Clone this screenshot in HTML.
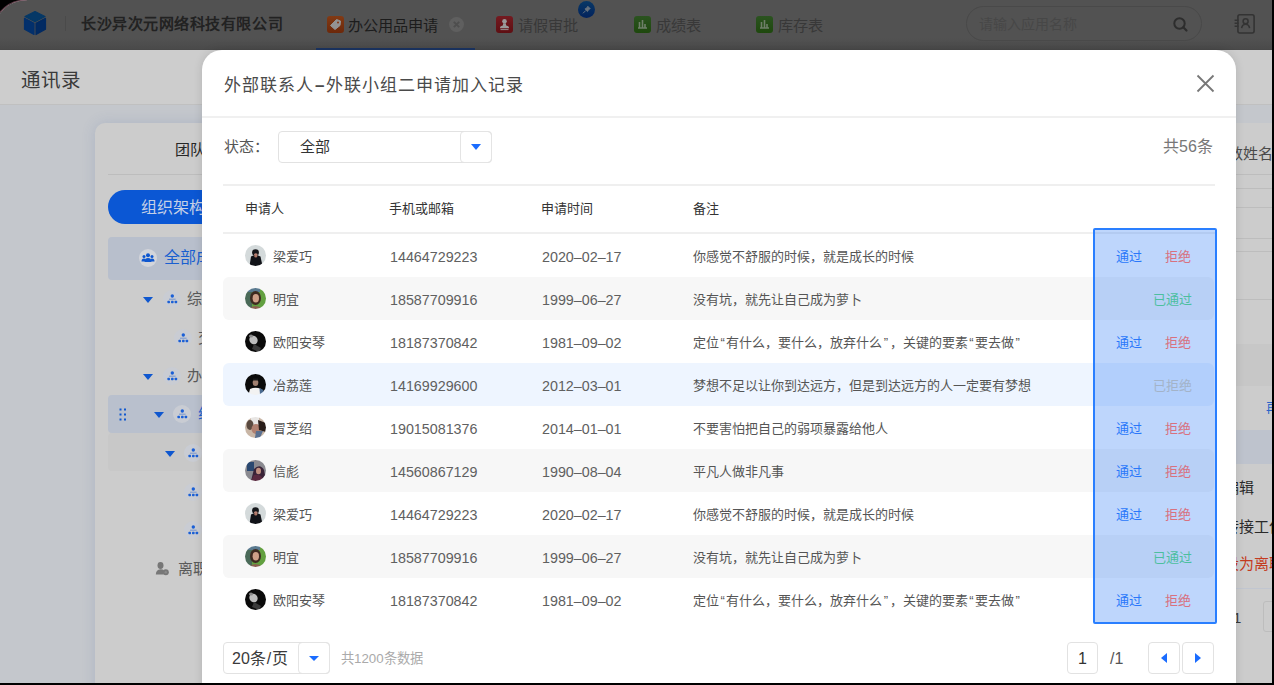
<!DOCTYPE html>
<html lang="zh-CN"><head><meta charset="utf-8">
<style>
*{box-sizing:border-box;margin:0;padding:0}
html,body{width:1274px;height:685px;overflow:hidden;background:#000}
body{position:relative;font-family:"Liberation Sans",sans-serif}
.a{position:absolute;white-space:nowrap}
#app{position:absolute;left:-7px;top:0;width:1279px;height:683px;background:#c4c7cc;border-top-left-radius:34px;overflow:hidden}
#hdr{position:absolute;left:0;top:0;width:1279px;height:50px;background:linear-gradient(#525252 0,#525252 38px,#4a4a4a 49px,#464646 50px)}
.tab{font-size:15.2px;line-height:16px;color:#383838}
.ico{position:absolute;width:17px;height:17px;border-radius:3px}
#bgtitle{left:0;top:50px;width:1274px;height:55px;background:#cdcdcd;border-bottom:1px solid #c0c0c0}
#card{left:95px;top:123px;width:1300px;height:600px;background:#cccccc;border-radius:10px;box-shadow:0 0 14px rgba(70,100,160,0.18)}
.tree{font-size:15px;line-height:18px;color:#5a5a5a}
.tc{position:absolute;width:18px;height:18px;border-radius:50%;background:#c9ccd3}
.tri{position:absolute;width:0;height:0;border-left:5px solid transparent;border-right:5px solid transparent;border-top:6px solid #0f57cf;margin-left:1px;margin-top:1px}
#modal{left:202px;top:50px;width:1034px;height:660px;background:#fff;border-radius:20px;box-shadow:0 0 10px rgba(0,0,0,0.12)}
.th{font-size:13px;line-height:16px;color:#333;font-weight:500}
.row{position:absolute;left:21px;width:991px;height:43px;border-radius:6px}
.td{position:absolute;font-size:13px;line-height:16px;color:#555;top:15px}
.num{font-size:14.3px;color:#606060}
.av{position:absolute;left:22px;top:11px;width:21px;height:21px;clip-path:circle(50%);filter:blur(0.4px)}
.act{font-size:13px;line-height:16px}
.ok{color:#2a78fa}
.q{margin:0 1.5px}
.no{color:#d8717f}
</style></head>
<body>
<div id="app">
  <div id="hdr"></div>
</div>
<!-- header content (absolute to body) -->
<svg class="a" style="left:0;top:0" width="40" height="20" viewBox="0 0 40 20"><path d="M0 12.3 A34 34 0 0 1 27 0" fill="none" stroke="rgba(170,110,130,0.55)" stroke-width="1.2"/></svg>
<svg class="a" style="left:23px;top:10px" width="24" height="26" viewBox="0 0 24 26">
  <g stroke-linejoin="round" stroke-width="1.2"><path d="M12 1.5 L22 6.5 L12 11.8 L2 6.5 Z" fill="#053866" stroke="#053866"/>
  <path d="M1.5 8.3 L11 13.3 L11 24.5 L1.5 19.3 Z" fill="#03306c" stroke="#03306c"/>
  <path d="M13 13.3 L22.5 8.3 L22.5 19.3 L13 24.5 Z" fill="#022a62" stroke="#022a62"/></g>
</svg>
<div class="a" style="left:65px;top:16px;width:1px;height:15px;background:#4a4a4a"></div>
<div class="a" style="left:81px;top:15px;font-size:15px;line-height:18px;font-weight:bold;color:#222;letter-spacing:0.55px">长沙异次元网络科技有限公司</div>

<div class="ico a" style="left:327px;top:16px;background:linear-gradient(#823a14,#6c280a)"></div>
<svg class="a" style="left:327px;top:16px" width="17" height="17" viewBox="0 0 17 17"><path d="M9.5 3.5 L13.5 5 L13 9.5 L8 13.5 L3.5 9.5 Z" fill="#939393" stroke="#939393" stroke-width="1" stroke-linejoin="round"/><circle cx="11" cy="6.5" r="1" fill="#84340f"/></svg>
<div class="a tab" style="left:348px;top:17.5px;color:#1c1c1c;font-weight:500">办公用品申请</div>
<div class="a" style="left:449px;top:17px;width:15px;height:15px;border-radius:50%;background:#5f5f5f"></div>
<svg class="a" style="left:449px;top:17px" width="15" height="15" viewBox="0 0 15 15"><path d="M4.8 4.8 L10.2 10.2 M10.2 4.8 L4.8 10.2" stroke="#4e4e4e" stroke-width="1.9"/></svg>
<div class="a" style="left:316px;top:48px;width:159px;height:2px;background:#1b3462"></div>

<div class="ico a" style="left:496px;top:16px;background:linear-gradient(#741a20,#5e0f13)"></div>
<svg class="a" style="left:496px;top:16px" width="17" height="17" viewBox="0 0 17 17"><circle cx="8.5" cy="5.3" r="2.3" fill="#9a9a9a"/><path d="M7.2 7.2 L9.8 7.2 L10.2 9.6 Q13 10 13 11.6 L13 12.3 L4 12.3 L4 11.6 Q4 10 6.8 9.6 Z" fill="#9a9a9a"/><path d="M4.5 13.6 H12.5" stroke="#9a9a9a" stroke-width="0.9"/></svg>
<div class="a tab" style="left:518px;top:17.5px">请假审批</div>
<div class="a" style="left:577.5px;top:1.2px;width:17px;height:17px;border-radius:50%;background:linear-gradient(#083866,#02225c)"></div>
<svg class="a" style="left:578px;top:1px" width="17" height="17" viewBox="0 0 17 17"><path d="M9.8 5.2 L12.3 7.7 L10.8 8.4 L9.5 10.6 L6.9 8 L9 6.7 Z" fill="#67727e" stroke="#67727e" stroke-width="0.8" stroke-linejoin="round"/><path d="M7.8 9.5 L5 12.3" stroke="#67727e" stroke-width="1"/></svg>

<div class="ico a" style="left:634px;top:16px;background:linear-gradient(#2b5320,#1e480d)"></div>
<svg class="a" style="left:634px;top:16px" width="17" height="17" viewBox="0 0 17 17"><path d="M4 12 L13 12 M5.5 12 L5.5 6 M8.5 12 L8.5 4 M11 12 L11 8" stroke="#6f7f69" stroke-width="1.6"/></svg>
<div class="a tab" style="left:656px;top:17.5px">成绩表</div>
<div class="ico a" style="left:756px;top:16px;background:linear-gradient(#2b5320,#1e480d)"></div>
<svg class="a" style="left:756px;top:16px" width="17" height="17" viewBox="0 0 17 17"><path d="M4 12 L13 12 M5.5 12 L5.5 6 M8.5 12 L8.5 4 M11 12 L11 8" stroke="#6f7f69" stroke-width="1.6"/></svg>
<div class="a tab" style="left:778px;top:17.5px">库存表</div>

<div class="a" style="left:966px;top:6px;width:236px;height:35px;border-radius:18px;border:1px solid #494949;background:#525252"></div>
<div class="a" style="left:979px;top:16px;font-size:14px;line-height:16px;color:#474747">请输入应用名称</div>
<svg class="a" style="left:1172px;top:16px" width="17" height="17" viewBox="0 0 17 17"><circle cx="7.5" cy="7.5" r="5.2" fill="none" stroke="#2d2d2d" stroke-width="2"/><path d="M11.3 11.3 L14.5 14.5" stroke="#2d2d2d" stroke-width="2.2" stroke-linecap="round"/></svg>
<svg class="a" style="left:1234px;top:13px" width="22" height="22" viewBox="0 0 22 22"><rect x="3.9" y="1.8" width="16.2" height="18.2" rx="2" fill="none" stroke="#333" stroke-width="1.6"/><circle cx="11.6" cy="8.2" r="2.5" fill="none" stroke="#333" stroke-width="1.5"/><path d="M7.6 15.2 Q8.2 11.2 11.6 11.2 Q15 11.2 15.6 15.2" fill="none" stroke="#333" stroke-width="1.5"/><path d="M0.6 7.2 H4.5 M0.6 10.2 H4.5 M0.6 13.2 H4.5" stroke="#333" stroke-width="1.4"/></svg>

<!-- background page -->
<div class="a" id="bgtitle"></div>
<div class="a" style="left:21px;top:70px;font-size:19.5px;line-height:20px;color:#3a3a3a">通讯录</div>
<div class="a" id="card"></div>
<div class="a" style="left:175px;top:141px;font-size:15px;line-height:17px;color:#262626">团队</div>
<div class="a" style="left:108px;top:174px;width:1200px;height:1px;background:#bdbdbd"></div>
<div class="a" style="left:108px;top:190px;width:200px;height:34px;border-radius:17px;background:#0b57d4"></div>
<div class="a" style="left:141px;top:199px;font-size:16px;line-height:18px;color:#c5d0e6">组织架构</div>
<div class="a" style="left:108px;top:237px;width:200px;height:43px;background:#b8bfcc;border-radius:4px"></div>
<div class="tc" style="left:139px;top:249px;background:#d3d5da"></div>
<svg class="a" style="left:141px;top:252px" width="14" height="12" viewBox="0 0 14 12"><g fill="#0f57cf"><circle cx="7" cy="3.2" r="2"/><circle cx="3" cy="4.6" r="1.5"/><circle cx="11" cy="4.6" r="1.5"/><path d="M3.5 10 Q3.5 6 7 6 Q10.5 6 10.5 10 Z"/><path d="M0.5 9.5 Q0.5 6.5 3 6.5 Q4.2 6.5 4.6 7 L3.8 9.5 Z"/><path d="M13.5 9.5 Q13.5 6.5 11 6.5 Q9.8 6.5 9.4 7 L10.2 9.5 Z"/></g></svg>
<div class="a tree" style="left:164px;top:249px;color:#1a5fd0;font-size:16px">全部成员</div>

<div class="tri a" style="left:142px;top:296px"></div>
<div class="tc" style="left:163px;top:290px"></div>
<svg class="a tico" style="left:165px;top:292px" width="14" height="14" viewBox="0 0 14 14"><circle cx="7.3" cy="4" r="1.7" fill="#1a5fd6"/><path d="M4 7.2 H10.6" stroke="#6d8fd0" stroke-width="0.9"/><g fill="#1a5fd6"><rect x="2.4" y="8.7" width="2.6" height="2.6" rx="0.7"/><rect x="6" y="8.7" width="2.6" height="2.6" rx="0.7"/><rect x="9.6" y="8.7" width="2.6" height="2.6" rx="0.7"/></g></svg>
<div class="a tree" style="left:187px;top:290px">综合部</div>

<div class="tc" style="left:174px;top:329px"></div>
<svg class="a" style="left:176px;top:331px" width="14" height="14" viewBox="0 0 14 14"><circle cx="7.3" cy="4" r="1.7" fill="#1a5fd6"/><path d="M4 7.2 H10.6" stroke="#6d8fd0" stroke-width="0.9"/><g fill="#1a5fd6"><rect x="2.4" y="8.7" width="2.6" height="2.6" rx="0.7"/><rect x="6" y="8.7" width="2.6" height="2.6" rx="0.7"/><rect x="9.6" y="8.7" width="2.6" height="2.6" rx="0.7"/></g></svg>
<div class="a tree" style="left:198px;top:329px">交付</div>

<div class="tri a" style="left:142px;top:373px"></div>
<div class="tc" style="left:163px;top:367px"></div>
<svg class="a" style="left:165px;top:369px" width="14" height="14" viewBox="0 0 14 14"><circle cx="7.3" cy="4" r="1.7" fill="#1a5fd6"/><path d="M4 7.2 H10.6" stroke="#6d8fd0" stroke-width="0.9"/><g fill="#1a5fd6"><rect x="2.4" y="8.7" width="2.6" height="2.6" rx="0.7"/><rect x="6" y="8.7" width="2.6" height="2.6" rx="0.7"/><rect x="9.6" y="8.7" width="2.6" height="2.6" rx="0.7"/></g></svg>
<div class="a tree" style="left:187px;top:367px">办公室</div>

<div class="a" style="left:108px;top:395px;width:200px;height:38px;background:#b9c0cd;border-radius:4px"></div>
<svg class="a" style="left:119px;top:408px" width="8" height="13" viewBox="0 0 8 13"><g fill="#0f57cf"><rect x="0.5" y="0.5" width="2" height="2"/><rect x="5" y="0.5" width="2" height="2"/><rect x="0.5" y="5.5" width="2" height="2"/><rect x="5" y="5.5" width="2" height="2"/><rect x="0.5" y="10.5" width="2" height="2"/><rect x="5" y="10.5" width="2" height="2"/></g></svg>
<div class="tri a" style="left:153px;top:411px"></div>
<div class="tc" style="left:173px;top:405px"></div>
<svg class="a" style="left:175px;top:407px" width="14" height="14" viewBox="0 0 14 14"><circle cx="7.3" cy="4" r="1.7" fill="#1a5fd6"/><path d="M4 7.2 H10.6" stroke="#6d8fd0" stroke-width="0.9"/><g fill="#1a5fd6"><rect x="2.4" y="8.7" width="2.6" height="2.6" rx="0.7"/><rect x="6" y="8.7" width="2.6" height="2.6" rx="0.7"/><rect x="9.6" y="8.7" width="2.6" height="2.6" rx="0.7"/></g></svg>
<div class="a tree" style="left:198px;top:405px;color:#1a5fd0">组织部</div>

<div class="a" style="left:108px;top:433px;width:200px;height:38px;background:#c8c8c8;border-radius:4px"></div>
<div class="tri a" style="left:164px;top:450px"></div>
<div class="tc" style="left:184px;top:444px"></div>
<svg class="a" style="left:186px;top:446px" width="14" height="14" viewBox="0 0 14 14"><circle cx="7.3" cy="4" r="1.7" fill="#1a5fd6"/><path d="M4 7.2 H10.6" stroke="#6d8fd0" stroke-width="0.9"/><g fill="#1a5fd6"><rect x="2.4" y="8.7" width="2.6" height="2.6" rx="0.7"/><rect x="6" y="8.7" width="2.6" height="2.6" rx="0.7"/><rect x="9.6" y="8.7" width="2.6" height="2.6" rx="0.7"/></g></svg>
<div class="tc" style="left:184px;top:483px"></div>
<svg class="a" style="left:186px;top:485px" width="14" height="14" viewBox="0 0 14 14"><circle cx="7.3" cy="4" r="1.7" fill="#1a5fd6"/><path d="M4 7.2 H10.6" stroke="#6d8fd0" stroke-width="0.9"/><g fill="#1a5fd6"><rect x="2.4" y="8.7" width="2.6" height="2.6" rx="0.7"/><rect x="6" y="8.7" width="2.6" height="2.6" rx="0.7"/><rect x="9.6" y="8.7" width="2.6" height="2.6" rx="0.7"/></g></svg>
<div class="tc" style="left:184px;top:521px"></div>
<svg class="a" style="left:186px;top:523px" width="14" height="14" viewBox="0 0 14 14"><circle cx="7.3" cy="4" r="1.7" fill="#1a5fd6"/><path d="M4 7.2 H10.6" stroke="#6d8fd0" stroke-width="0.9"/><g fill="#1a5fd6"><rect x="2.4" y="8.7" width="2.6" height="2.6" rx="0.7"/><rect x="6" y="8.7" width="2.6" height="2.6" rx="0.7"/><rect x="9.6" y="8.7" width="2.6" height="2.6" rx="0.7"/></g></svg>
<svg class="a" style="left:155px;top:561px" width="15" height="15" viewBox="0 0 15 15"><g fill="#777"><ellipse cx="5.5" cy="4.5" rx="3" ry="3.4"/><path d="M0.8 13.5 Q1 8.5 5.5 8.2 Q8 8.2 9 9.5 L8.5 13.5 Z"/><circle cx="10.8" cy="11.2" r="3"/></g><circle cx="10.8" cy="11.2" r="1.2" fill="#8a8a8a"/></svg>
<div class="a tree" style="left:178px;top:560px">离职人员</div>

<!-- right side background -->
<div class="a" style="left:1236px;top:105px;width:40px;height:18px;background:#c4c7cc"></div>
<div class="a" style="left:1228px;top:145px;font-size:15px;line-height:18px;color:#4a4a4a">数姓名</div>
<div class="a" style="left:1236px;top:188px;width:40px;height:1px;background:#bdbdbd"></div>
<div class="a" style="left:1236px;top:207px;width:40px;height:1px;background:#bdbdbd"></div>
<div class="a" style="left:1236px;top:238px;width:40px;height:1px;background:#bdbdbd"></div>
<div class="a" style="left:1236px;top:251px;width:40px;height:1px;background:#bdbdbd"></div>
<div class="a" style="left:1236px;top:299px;width:40px;height:1px;background:#bdbdbd"></div>
<div class="a" style="left:1236px;top:344px;width:40px;height:42px;background:#c7c7c7"></div>
<div class="a" style="left:1266px;top:400px;font-size:13px;line-height:16px;color:#2a64c8">再</div>
<div class="a" style="left:1236px;top:430px;width:40px;height:34px;background:#bec3cd"></div>
<div class="a" style="left:1224px;top:479px;font-size:15px;line-height:17px;color:#2a2a2a">编辑</div>
<div class="a" style="left:1224px;top:518px;font-size:15px;line-height:17px;color:#2a2a2a">转接工作</div>
<div class="a" style="left:1224px;top:555px;font-size:15px;line-height:17px;color:#c43a20">设为离职</div>
<div class="a" style="left:1236px;top:588px;width:40px;height:1px;background:#c1c6d0"></div>
<div class="a" style="left:1233px;top:609px;font-size:15px;line-height:17px;color:#3a3a3a">1</div>
<div class="a" style="left:1263px;top:601px;width:30px;height:31px;border:1px solid #bdbdbd;border-radius:3px"></div>

<!-- modal -->
<div class="a" id="modal"></div>
<div class="a" style="left:224px;top:77px;font-size:17px;line-height:18px;color:#4a4a4a;letter-spacing:1px">外部联系人<span style="font-family:'Liberation Sans';font-weight:bold;margin:0 1px">–</span>外联小组二申请加入记录</div>
<svg class="a" style="left:1196px;top:74px" width="19" height="19" viewBox="0 0 19 19"><path d="M1.5 1.5 L17.5 17.5 M17.5 1.5 L1.5 17.5" stroke="#777" stroke-width="1.8"/></svg>
<div class="a" style="left:202px;top:116px;width:1034px;height:2px;background:#f0f0f0"></div>

<div class="a" style="left:224px;top:139px;font-size:15px;line-height:16px;color:#555">状态：</div>
<div class="a" style="left:278px;top:131px;width:214px;height:32px;border:1px solid #e2e2e2;border-radius:4px"></div>
<div class="a" style="left:460px;top:131px;width:32px;height:32px;border:1px solid #e4e4e4;border-radius:4px"></div>
<div class="a" style="left:300px;top:139px;font-size:15px;line-height:16px;color:#333">全部</div>
<div class="a" style="left:471px;top:144px;width:0;height:0;border-left:5px solid transparent;border-right:5px solid transparent;border-top:6px solid #1a6cff"></div>
<div class="a" style="left:1163px;top:139px;font-size:16px;line-height:16px;color:#777">共56条</div>

<div class="a" style="left:223px;top:184px;width:992px;height:2px;background:#efefef"></div>
<div class="a th" style="left:245px;top:201px">申请人</div>
<div class="a th" style="left:389px;top:201px">手机或邮箱</div>
<div class="a th" style="left:541px;top:201px">申请时间</div>
<div class="a th" style="left:693px;top:201px">备注</div>
<div class="a" style="left:223px;top:232px;width:992px;height:2px;background:#efefef"></div>

<!--ROWS-->
<div id="rows" class="a" style="left:202px;top:234px;width:1034px;height:390px">
<div class="row" style="top:0px;"><svg class="av" viewBox="0 0 21 21"><rect width="21" height="21" fill="#d4dadb"/><ellipse cx="10.5" cy="7.5" rx="3.4" ry="3.3" fill="#15161a"/><ellipse cx="10.8" cy="10.5" rx="2" ry="2.2" fill="#c08a7c"/><path d="M4.5 21 L6 11.5 Q10.5 8.5 15.5 11.5 L17.5 21 Z" fill="#111318"/><ellipse cx="10.8" cy="11" rx="1.6" ry="1.6" fill="#b07868"/></svg><div class="td" style="left:50px">梁爱巧</div><div class="td num" style="left:167px">14464729223</div><div class="td num" style="left:319px">2020–02–17</div><div class="td" style="left:470px">你感觉不舒服的时候，就是成长的时候</div></div>
<div class="row" style="top:43px;background:#f7f7f7;"><svg class="av" viewBox="0 0 21 21"><rect width="21" height="21" fill="#62a040"/><rect x="0" y="0" width="7" height="21" fill="#4a6a58"/><rect x="3" y="0" width="12" height="4" fill="#5a7a90"/><ellipse cx="10.5" cy="10" rx="5.5" ry="7" fill="#3e2a20"/><ellipse cx="10.8" cy="10.2" rx="3.2" ry="4.2" fill="#cfa088"/><path d="M4 21 Q10.5 15 17 21 Z" fill="#8a6050"/></svg><div class="td" style="left:50px">明宜</div><div class="td num" style="left:167px">18587709916</div><div class="td num" style="left:319px">1999–06–27</div><div class="td" style="left:470px">没有坑，就先让自己成为萝卜</div></div>
<div class="row" style="top:86px;"><svg class="av" viewBox="0 0 21 21"><rect width="21" height="21" fill="#0a0a0a"/><ellipse cx="8.5" cy="9" rx="4" ry="4.5" fill="#bdbdbd" transform="rotate(-35 8.5 9)"/><ellipse cx="6" cy="5" rx="2" ry="1.5" fill="#888"/><path d="M9 13 L16 17 L14 21 L7 18 Z" fill="#3a3a3a"/></svg><div class="td" style="left:50px">欧阳安琴</div><div class="td num" style="left:167px">18187370842</div><div class="td num" style="left:319px">1981–09–02</div><div class="td" style="left:470px">定位<span class=q>“</span>有什么，要什么，放弃什么<span class=q>”</span>，关键的要素<span class=q>“</span>要去做<span class=q>”</span></div></div>
<div class="row" style="top:129px;background:#eef5ff;"><svg class="av" viewBox="0 0 21 21"><rect width="21" height="21" fill="#0b0b0b"/><ellipse cx="10.5" cy="8.5" rx="2.8" ry="3.6" fill="#a08070"/><rect x="8" y="4.5" width="5" height="2" fill="#1a1a1a"/><path d="M3.5 21 L5 15 Q10.5 12.5 16 15 L17 21 Z" fill="#f2f2f2"/><path d="M14.5 14 L18.5 16 L18 21 L15 21 Z" fill="#4a6a90"/></svg><div class="td" style="left:50px">冶荔莲</div><div class="td num" style="left:167px">14169929600</div><div class="td num" style="left:319px">2012–03–01</div><div class="td" style="left:470px">梦想不足以让你到达远方，但是到达远方的人一定要有梦想</div></div>
<div class="row" style="top:172px;"><svg class="av" viewBox="0 0 21 21"><rect width="21" height="21" fill="#c9b6a6"/><rect x="6" y="0" width="8" height="8" fill="#e8e6e4"/><ellipse cx="5" cy="8" rx="3.5" ry="5" fill="#5a4a40"/><ellipse cx="11" cy="12" rx="4.5" ry="5" fill="#b08070"/><path d="M13 3 L21 6 L21 15 L14 13 Z" fill="#2a1e1a"/><path d="M11 14 L18 14 L15 21 L10 21 Z" fill="#5a7090"/></svg><div class="td" style="left:50px">冒芝绍</div><div class="td num" style="left:167px">19015081376</div><div class="td num" style="left:319px">2014–01–01</div><div class="td" style="left:470px">不要害怕把自己的弱项暴露给他人</div></div>
<div class="row" style="top:215px;background:#f7f7f7;"><svg class="av" viewBox="0 0 21 21"><rect width="21" height="21" fill="#8a8a90"/><rect x="2" y="2" width="7" height="9" fill="#2a4870"/><path d="M9 9 Q15 3 19 10 L21 21 L6 21 Z" fill="#3a2438"/><ellipse cx="13.5" cy="11" rx="2.5" ry="3.2" fill="#c09080"/><path d="M6 21 L9 15 Q13 14 16 16 L19 21 Z" fill="#5a2a40"/></svg><div class="td" style="left:50px">信彪</div><div class="td num" style="left:167px">14560867129</div><div class="td num" style="left:319px">1990–08–04</div><div class="td" style="left:470px">平凡人做非凡事</div></div>
<div class="row" style="top:258px;"><svg class="av" viewBox="0 0 21 21"><rect width="21" height="21" fill="#d4dadb"/><ellipse cx="10.5" cy="7.5" rx="3.4" ry="3.3" fill="#15161a"/><ellipse cx="10.8" cy="10.5" rx="2" ry="2.2" fill="#c08a7c"/><path d="M4.5 21 L6 11.5 Q10.5 8.5 15.5 11.5 L17.5 21 Z" fill="#111318"/><ellipse cx="10.8" cy="11" rx="1.6" ry="1.6" fill="#b07868"/></svg><div class="td" style="left:50px">梁爱巧</div><div class="td num" style="left:167px">14464729223</div><div class="td num" style="left:319px">2020–02–17</div><div class="td" style="left:470px">你感觉不舒服的时候，就是成长的时候</div></div>
<div class="row" style="top:301px;background:#f7f7f7;"><svg class="av" viewBox="0 0 21 21"><rect width="21" height="21" fill="#62a040"/><rect x="0" y="0" width="7" height="21" fill="#4a6a58"/><rect x="3" y="0" width="12" height="4" fill="#5a7a90"/><ellipse cx="10.5" cy="10" rx="5.5" ry="7" fill="#3e2a20"/><ellipse cx="10.8" cy="10.2" rx="3.2" ry="4.2" fill="#cfa088"/><path d="M4 21 Q10.5 15 17 21 Z" fill="#8a6050"/></svg><div class="td" style="left:50px">明宜</div><div class="td num" style="left:167px">18587709916</div><div class="td num" style="left:319px">1999–06–27</div><div class="td" style="left:470px">没有坑，就先让自己成为萝卜</div></div>
<div class="row" style="top:344px;"><svg class="av" viewBox="0 0 21 21"><rect width="21" height="21" fill="#0a0a0a"/><ellipse cx="8.5" cy="9" rx="4" ry="4.5" fill="#bdbdbd" transform="rotate(-35 8.5 9)"/><ellipse cx="6" cy="5" rx="2" ry="1.5" fill="#888"/><path d="M9 13 L16 17 L14 21 L7 18 Z" fill="#3a3a3a"/></svg><div class="td" style="left:50px">欧阳安琴</div><div class="td num" style="left:167px">18187370842</div><div class="td num" style="left:319px">1981–09–02</div><div class="td" style="left:470px">定位<span class=q>“</span>有什么，要什么，放弃什么<span class=q>”</span>，关键的要素<span class=q>“</span>要去做<span class=q>”</span></div></div>
</div>
<div class="a" style="left:1093px;top:228px;width:124px;height:396px;border:2px solid #2a7fff;border-radius:2px;background:rgba(40,120,245,0.3)"></div>
<div class="a act ok" style="left:1116px;top:248.5px">通过</div><div class="a act no" style="left:1165px;top:248.5px">拒绝</div>
<div class="a act" style="left:1153px;top:291.5px;color:#4cbf9f">已通过</div>
<div class="a act ok" style="left:1116px;top:334.5px">通过</div><div class="a act no" style="left:1165px;top:334.5px">拒绝</div>
<div class="a act" style="left:1153px;top:377.5px;color:#a3b3c8">已拒绝</div>
<div class="a act ok" style="left:1116px;top:420.5px">通过</div><div class="a act no" style="left:1165px;top:420.5px">拒绝</div>
<div class="a act ok" style="left:1116px;top:463.5px">通过</div><div class="a act no" style="left:1165px;top:463.5px">拒绝</div>
<div class="a act ok" style="left:1116px;top:506.5px">通过</div><div class="a act no" style="left:1165px;top:506.5px">拒绝</div>
<div class="a act" style="left:1153px;top:549.5px;color:#4cbf9f">已通过</div>
<div class="a act ok" style="left:1116px;top:592.5px">通过</div><div class="a act no" style="left:1165px;top:592.5px">拒绝</div>
<!--/ROWS-->


<!-- footer -->
<div class="a" style="left:223px;top:642px;width:107px;height:32px;border:1px solid #e2e2e2;border-radius:4px"></div>
<div class="a" style="left:298px;top:642px;width:32px;height:32px;border:1px solid #e4e4e4;border-radius:4px"></div>
<div class="a" style="left:232px;top:650px;font-size:16px;line-height:17px;color:#3a3a3a">20条<span style="margin:0 1px">/</span>页</div>
<div class="a" style="left:309px;top:656px;width:0;height:0;border-left:5px solid transparent;border-right:5px solid transparent;border-top:5px solid #1a6cff"></div>
<div class="a" style="left:341px;top:651px;font-size:13.3px;line-height:15px;color:#aaa">共1200条数据</div>

<div class="a" style="left:1067px;top:642px;width:31px;height:32px;border:1px solid #e2e2e2;border-radius:4px"></div>
<div class="a" style="left:1078px;top:650px;font-size:16px;line-height:17px;color:#333">1</div>
<div class="a" style="left:1110px;top:650px;font-size:16px;line-height:17px;color:#555">/1</div>
<div class="a" style="left:1148px;top:642px;width:32px;height:32px;border:1px solid #e2e2e2;border-radius:4px"></div>
<div class="a" style="left:1182px;top:642px;width:32px;height:32px;border:1px solid #e2e2e2;border-radius:4px"></div>
<div class="a" style="left:1161px;top:653px;width:0;height:0;border-top:5px solid transparent;border-bottom:5px solid transparent;border-right:6px solid #1a6cff"></div>
<div class="a" style="left:1195px;top:653px;width:0;height:0;border-top:5px solid transparent;border-bottom:5px solid transparent;border-left:6px solid #1a6cff"></div>

<div class="a" style="left:1272px;top:0;width:2px;height:685px;background:#000"></div>
<div class="a" style="left:0;top:683px;width:1274px;height:2px;background:#000"></div>
</body></html>
